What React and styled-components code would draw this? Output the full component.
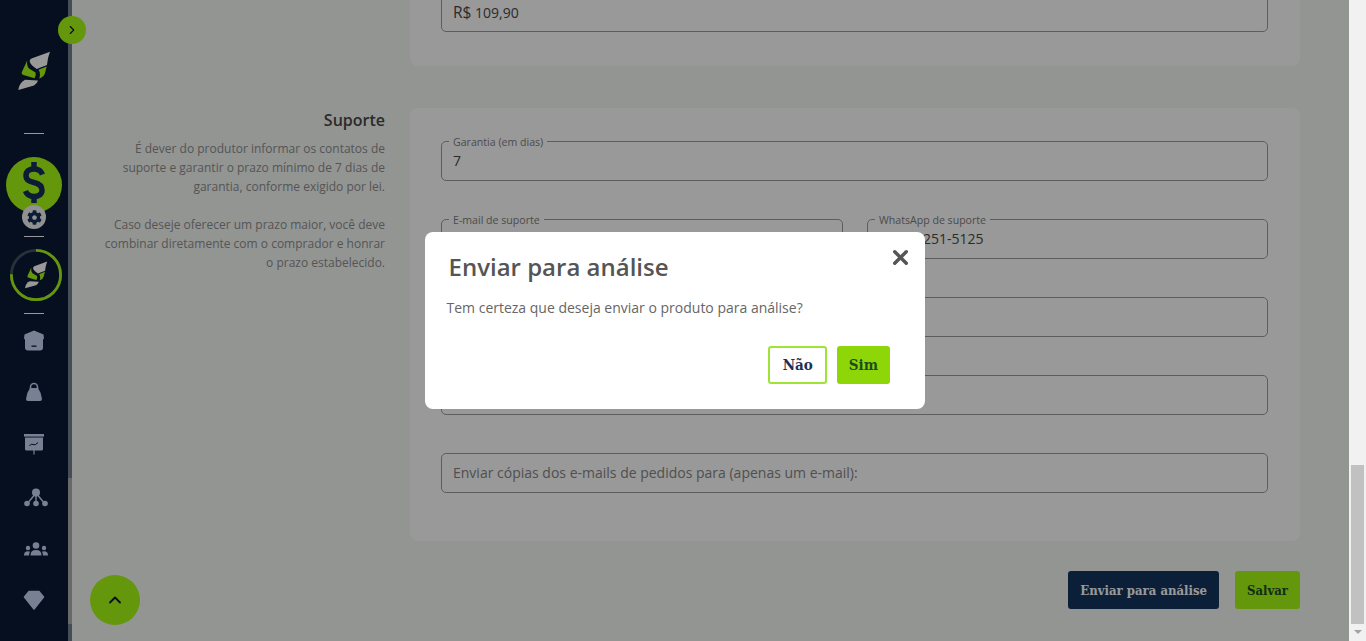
import React from "react"
import styled, { createGlobalStyle } from "styled-components"
import { ChevronRight, ChevronUp, X } from "lucide-react"
import { FaCog } from "react-icons/fa"

const GlobalStyle = createGlobalStyle`
  html, body { margin: 0; height: 100%; overflow: hidden; }
  body { font-family: "Open Sans", "Liberation Sans", sans-serif; }
  * { box-sizing: border-box; }
`

const Logo = ({ size = 40 }) => (
  <svg width={size} height={size} viewBox="0 0 40 40">
    <path fill="#fff" d="M36 .7 L17.5 7.4 Q15 8.6 16 11.5 Q17.5 14.5 22.7 18 L33 14 Q33.6 6.5 36 .7Z" />
    <path fill="#a8fc14" d="M13.2 9.5 L7.9 21 Q7 23 9.5 24 L20.5 27.2 Q22.5 24 21.5 21.5 L15 17.5 Q12.5 14.5 13.2 9.5Z" />
    <path fill="#a8fc14" d="M32.7 15.5 L24.5 18.8 Q26 20.5 26 24 L25.4 27.4 Q30 26 31 22Z" />
    <path fill="#fff" d="M4.3 39 Q5 33.5 8.5 30.5 L11 28.8 L24 29.6 Q23 33 20 34.5Z" />
  </svg>
)

const DollarIcon = () => (
  <svg width="56" height="56" viewBox="0 0 56 56">
    <g fill="none" stroke="#14305c" strokeWidth="5.5">
      <path d="M36.5 17.5 C35 13.5 32 12 28 12 C23 12 20 14.5 20 18.5 C20 23.5 24 24.5 28 25.5 C32 26.5 36 28 36 33 C36 37 33 39.5 28 39.5 C24 39.5 21 38 19.5 34" />
      <path d="M28 5 V12 M28 39.5 V46" />
    </g>
  </svg>
)

const HomeIcon = () => (
  <svg width="28" height="24" viewBox="0 0 28 24">
    <g transform="translate(0 1.5)">
      <path fill="#c8d8f5" d="M14 1 L23.5 5 L24 9 L23 10 L23 18 Q23 21 20 21 L8 21 Q5 21 5 18 L5 10 L4 9 L4.5 5Z" />
      <rect x="11.5" y="16" width="5" height="1.3" fill="#0a1a35" />
    </g>
  </svg>
)

const BagIcon = () => (
  <svg width="28" height="24" viewBox="0 0 28 24">
    <path fill="#c8d8f5" d="M10 8 H18 Q21.5 13 22 19 Q22 21 20 21 H8 Q6 21 6 19 Q6.5 13 10 8Z" />
    <path fill="none" stroke="#c8d8f5" strokeWidth="1.6" d="M10.5 9 V7 a3.5 3.5 0 0 1 7 0 V9" />
  </svg>
)

const BoardIcon = () => (
  <svg width="28" height="24" viewBox="0 0 28 24">
    <rect x="4" y="2" width="20" height="2.6" fill="#c8d8f5" />
    <path fill="#c8d8f5" d="M5 5.5 H23 V17 Q23 18.5 21.5 18.5 H6.5 Q5 18.5 5 17Z" />
    <rect x="13.4" y="18" width="1.2" height="4.5" fill="#c8d8f5" />
    <path fill="none" stroke="#0a1a35" strokeWidth="1" d="M9.5 14 Q11 11 13 12.5 T18 10.5" />
  </svg>
)

const NetworkIcon = () => (
  <svg width="28" height="24" viewBox="0 0 28 24">
    <g transform="translate(0 1)">
      <g stroke="#c8d8f5" strokeWidth="1.4">
        <line x1="16" y1="8" x2="7" y2="19" />
        <line x1="16" y1="8" x2="16" y2="19" />
        <line x1="16" y1="8" x2="25" y2="19" />
      </g>
      <g fill="#c8d8f5">
        <circle cx="16" cy="7.5" r="4" />
        <circle cx="7" cy="18.5" r="2.8" />
        <circle cx="16" cy="18.5" r="2.8" />
        <circle cx="25" cy="18.5" r="2.8" />
      </g>
    </g>
  </svg>
)

const UsersIcon = () => (
  <svg width="28" height="24" viewBox="0 0 28 24">
    <g fill="#c8d8f5" transform="translate(0 1.5)">
      <circle cx="16" cy="8" r="3.3" />
      <path d="M10.5 18 Q10.5 12.6 16 12.6 T21.5 18Z" />
      <circle cx="8" cy="10.5" r="2.2" />
      <path d="M4 18 Q4 13.8 8 13.8 Q9.4 13.8 10 14.3 Q9 15.8 9 18Z" />
      <circle cx="24" cy="10.5" r="2.2" />
      <path d="M28 18 Q28 13.8 24 13.8 Q22.6 13.8 22 14.3 Q23 15.8 23 18Z" />
    </g>
  </svg>
)

const DiamondIcon = () => (
  <svg width="28" height="24" viewBox="0 0 28 24">
    <path fill="#c8d8f5" stroke="#c8d8f5" strokeWidth="1.5" strokeLinejoin="round" d="M9 3.5 H19 L23.5 9 L14 21 L4.5 9Z" />
  </svg>
)

const navIcons = [HomeIcon, BagIcon, BoardIcon, NetworkIcon, UsersIcon, DiamondIcon]

const App = () => {
  return (
    <Shell>
      <GlobalStyle />
      <Viewport>
        <Sidebar>
          <LogoBox><Logo /></LogoBox>
          <Divider />
          <DollarBadge>
            <DollarIcon />
            <GearBadge><FaCog size={15} color="#14305c" /></GearBadge>
          </DollarBadge>
          <Divider />
          <Ring>
            <RingSvg width="52" height="52" viewBox="0 0 52 52">
              <circle cx="26" cy="26" r="24.6" fill="none" stroke="#44505f" strokeWidth="2.8" />
              <circle cx="26" cy="26" r="24.6" fill="none" stroke="#a8fc14" strokeWidth="2.8" strokeDasharray="116 155" transform="rotate(-90 26 26)" />
            </RingSvg>
            <Logo size={28} />
          </Ring>
          <Divider />
          <NavList>
            {navIcons.map((Icon, i) => (
              <NavItem key={i}><Icon /></NavItem>
            ))}
          </NavList>
        </Sidebar>
        <SideTrack><SideThumb /></SideTrack>
        <ToggleButton><ChevronRight size={14} strokeWidth={2} color="#0a1a35" /></ToggleButton>
        <Main>
          <Section>
            <Aside />
            <Card $first>
              <Field label="Preço" value={<><Currency>R$</Currency> 109,90</>} />
            </Card>
          </Section>
          <Section>
            <Aside>
              <AsideTitle>Suporte</AsideTitle>
              <AsideText>
                É dever do produtor informar os contatos de suporte e garantir o prazo mínimo de 7 dias de garantia, conforme exigido por lei.
                <br /><br />
                Caso deseje oferecer um prazo maior, você deve combinar diretamente com o comprador e honrar o prazo estabelecido.
              </AsideText>
            </Aside>
            <Card>
              <FieldStack>
                <Field label="Garantia (em dias)" value="7" />
                <FieldRow>
                  <Field label="E-mail de suporte" value="suporte@produto.com" />
                  <Field label="WhatsApp de suporte" value="(11) 99251-5125" />
                </FieldRow>
                <Field />
                <Field />
                <Field placeholder="Enviar cópias dos e-mails de pedidos para (apenas um e-mail):" />
              </FieldStack>
            </Card>
          </Section>
          <Actions>
            <PageButton $primary>Enviar para análise</PageButton>
            <PageButton>Salvar</PageButton>
          </Actions>
        </Main>
        <ScrollTop><ChevronUp size={20} strokeWidth={2.2} color="#0a1a35" /></ScrollTop>
        <Overlay>
          <Modal>
            <ModalTitle>Enviar para análise</ModalTitle>
            <CloseButton><X size={23} strokeWidth={3.6} color="#555" /></CloseButton>
            <ModalText>Tem certeza que deseja enviar o produto para análise?</ModalText>
            <ModalActions>
              <ModalButton>Não</ModalButton>
              <ModalButton $confirm>Sim</ModalButton>
            </ModalActions>
          </Modal>
        </Overlay>
      </Viewport>
      <PageTrack>
        <PageThumb />
        <PageArrow />
      </PageTrack>
    </Shell>
  )
}

const Field = ({ label, value, placeholder }) => (
  <FieldBox>
    {label && <FieldLabel>{label}</FieldLabel>}
    {value && <FieldValue>{value}</FieldValue>}
    {placeholder && <FieldPlaceholder>{placeholder}</FieldPlaceholder>}
  </FieldBox>
)

export default App

const Shell = styled.div`
  display: flex;
  width: 1366px;
  height: 641px;
  overflow: hidden;
`
const Viewport = styled.div`
  position: relative;
  display: flex;
  flex: 1;
  background: #f6f8f6;
  overflow: hidden;
`
const Sidebar = styled.nav`
  display: flex;
  flex-direction: column;
  align-items: center;
  flex: 0 0 68px;
  padding-top: 51px;
  background: #0a1a35;
`
const SideTrack = styled.div`
  flex: 0 0 4px;
  background: #77808f;
`
const SideThumb = styled.div`
  height: 146px;
  margin-top: 478px;
  background: #adadad;
`
const LogoBox = styled.div`
  display: flex;
  height: 40px;
  margin-bottom: 42px;
`
const Divider = styled.div`
  flex: none;
  width: 20px;
  height: 1px;
  background: #fff;
`
const DollarBadge = styled.div`
  position: relative;
  display: flex;
  width: 56px;
  height: 56px;
  margin: 23px 0;
  border-radius: 50%;
  background: #a8fc14;
`
const GearBadge = styled.div`
  position: absolute;
  left: 16px;
  top: 48px;
  display: flex;
  align-items: center;
  justify-content: center;
  width: 24px;
  height: 24px;
  border-radius: 50%;
  background: #f2f2f2;
`
const Ring = styled.div`
  position: relative;
  display: flex;
  align-items: center;
  justify-content: center;
  width: 52px;
  height: 52px;
  margin: 12px 0 12px 4px;
`
const RingSvg = styled.svg`
  position: absolute;
  left: 0;
  top: 0;
`
const NavList = styled.div`
  display: flex;
  flex-direction: column;
  gap: 28px;
  margin-top: 14px;
`
const NavItem = styled.div`
  display: flex;
  height: 24px;
`
const ToggleButton = styled.div`
  position: absolute;
  left: 58px;
  top: 16px;
  display: flex;
  align-items: center;
  justify-content: center;
  width: 28px;
  height: 28px;
  border-radius: 50%;
  background: #a8fc14;
`
const Main = styled.main`
  flex: 1;
  padding: 0 49px 0 28px;
`
const Section = styled.section`
  display: grid;
  grid-template-columns: 285px 890px;
  column-gap: 25px;
  margin-bottom: 42px;
`
const Aside = styled.div`
  padding-top: 2px;
  text-align: right;
`
const AsideTitle = styled.h3`
  margin: 0 0 9px;
  font-size: 16px;
  line-height: 20px;
  font-weight: 600;
  color: #474747;
`
const AsideText = styled.p`
  margin: 0;
  font-size: 12px;
  line-height: 19px;
  color: #8e8e8e;
`
const Card = styled.div`
  padding: ${(p) => (p.$first ? "0 32px 34px 31px" : "33px 32px 48px 31px")};
  margin-top: ${(p) => (p.$first ? "-8px" : "0")};
  border-radius: 8px;
  background: #fff;
`
const FieldStack = styled.div`
  display: flex;
  flex-direction: column;
  gap: 38px;
`
const FieldRow = styled.div`
  display: grid;
  grid-template-columns: 402px 401px;
  column-gap: 24px;
`
const FieldBox = styled.div`
  position: relative;
  display: flex;
  align-items: center;
  height: 40px;
  padding: 0 11px 1px;
  border: 1px solid #9c9c9c;
  border-radius: 5px;
`
const FieldLabel = styled.span`
  position: absolute;
  left: 7px;
  top: -7px;
  padding: 0 4px;
  font-size: 10.6px;
  line-height: 14px;
  color: #7e7e7e;
  background: #fff;
`
const FieldValue = styled.span`
  font-size: 14px;
  color: #484848;
`
const Currency = styled.span`
  font-size: 15.5px;
`
const FieldPlaceholder = styled.span`
  font-size: 14px;
  color: #858585;
`
const Actions = styled.div`
  display: flex;
  justify-content: flex-end;
  gap: 16px;
  margin-top: -12px;
`
const PageButton = styled.button`
  height: 38px;
  padding: 0 12px;
  border: none;
  border-radius: 3px;
  font-family: "DejaVu Serif Condensed", "DejaVu Serif", serif;
  font-size: 13px;
  font-weight: 700;
  color: ${(p) => (p.$primary ? "#fff" : "#1b4d22")};
  background: ${(p) => (p.$primary ? "#14355f" : "#a8fc14")};
`
const ScrollTop = styled.div`
  position: absolute;
  left: 90px;
  top: 575px;
  display: flex;
  align-items: center;
  justify-content: center;
  width: 50px;
  height: 50px;
  border-radius: 50%;
  background: #a8fc14;
`
const Overlay = styled.div`
  position: absolute;
  inset: 0;
  display: flex;
  align-items: center;
  justify-content: center;
  background: rgba(0, 0, 0, 0.4);
`
const Modal = styled.div`
  position: relative;
  width: 500px;
  height: 177px;
  padding: 18px 35px 25px 22px;
  border-radius: 8px;
  background: #fff;
`
const ModalTitle = styled.h2`
  margin: 0 0 15px 2px;
  font-size: 24px;
  line-height: 33px;
  font-weight: 600;
  color: #555;
`
const CloseButton = styled.div`
  position: absolute;
  right: 13px;
  top: 14px;
  display: flex;
`
const ModalText = styled.p`
  margin: 0;
  font-size: 14px;
  line-height: 20px;
  color: #666;
`
const ModalActions = styled.div`
  display: flex;
  justify-content: flex-end;
  gap: 10px;
  margin-top: 28px;
`
const ModalButton = styled.button`
  height: 38px;
  padding: ${(p) => (p.$confirm ? "0 11.5px" : "0 12.5px")};
  border: ${(p) => (p.$confirm ? "none" : "2px solid #9fe337")};
  border-radius: 3px;
  font-family: "DejaVu Serif Condensed", "DejaVu Serif", serif;
  font-size: 15px;
  font-weight: 700;
  color: ${(p) => (p.$confirm ? "#1b4d22" : "#1c2f55")};
  background: ${(p) => (p.$confirm ? "#8fd608" : "#fff")};
`
const PageTrack = styled.div`
  position: relative;
  flex: 0 0 17px;
  background: #f1f1f1;
`
const PageThumb = styled.div`
  width: 13px;
  height: 159px;
  margin: 465px 2px 0;
  background: #c1c1c1;
`
const PageArrow = styled.div`
  position: absolute;
  left: 5px;
  bottom: 7px;
  width: 0;
  height: 0;
  border-left: 4px solid transparent;
  border-right: 4px solid transparent;
  border-top: 4px solid #a3a3a3;
`
